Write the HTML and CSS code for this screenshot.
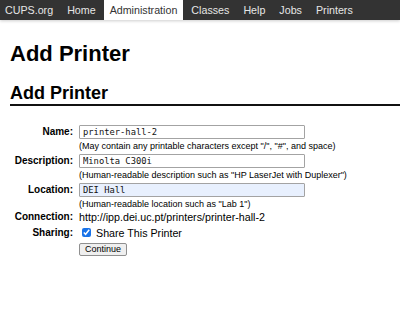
FILE: index.html
```html
<!DOCTYPE html>
<html lang="en">

<head>
  <meta charset="UTF-8">
  <meta name="viewport" content="width=device-width, initial-scale=1.0">
  <title>Add Printer - CUPS</title>
  <link rel="stylesheet" href="styles.css">
</head>

<body>
  <nav class="header">
    <ul class="menu">
      <li><a href="#">CUPS.org</a></li>
      <li><a href="#">Home</a></li>
      <li class="active"><a href="#">Administration</a></li>
      <li><a href="#">Classes</a></li>
      <li><a href="#">Help</a></li>
      <li><a href="#">Jobs</a></li>
      <li><a href="#">Printers</a></li>
    </ul>
  </nav>
  <main class="body">
    <h1 class="title">Add Printer</h1>
    <h2 class="subtitle">Add Printer</h2>
    <form class="form">
      <table class="fields">
        <tr class="row-input">
          <th>Name:</th>
          <td>
            <input class="field" type="text" name="PRINTER_NAME" value="printer-hall-2">
            <div class="hint">(May contain any printable characters except "/", "#", and space)</div>
          </td>
        </tr>
        <tr class="row-input">
          <th>Description:</th>
          <td>
            <input class="field" type="text" name="PRINTER_INFO" value="Minolta C300i">
            <div class="hint">(Human-readable description such as "HP LaserJet with Duplexer")</div>
          </td>
        </tr>
        <tr class="row-input">
          <th>Location:</th>
          <td>
            <input class="field filled" type="text" name="PRINTER_LOCATION" value="DEI Hall">
            <div class="hint">(Human-readable location such as "Lab 1")</div>
          </td>
        </tr>
        <tr class="row-text first">
          <th>Connection:</th>
          <td>http://ipp.dei.uc.pt/printers/printer-hall-2</td>
        </tr>
        <tr class="row-text">
          <th>Sharing:</th>
          <td>
            <label class="check"><input type="checkbox" name="PRINTER_IS_SHARED" checked> Share This Printer</label>
          </td>
        </tr>
        <tr class="row-submit">
          <th></th>
          <td><button class="btn" type="button">Continue</button></td>
        </tr>
      </table>
    </form>
  </main>
</body>

</html>
```

FILE: styles.css
```css
* {
  margin: 0;
  padding: 0;
  box-sizing: border-box;
}

body {
  font-family: "Liberation Sans", Arial, sans-serif;
  color: #000;
  background: #fff;
}

/* top menu */
.header {
  background: #333;
  box-shadow: 0 1px 3px rgba(0, 0, 0, 0.2);
}

.menu {
  display: flex;
  list-style: none;
  height: 20px;
  margin-left: -2px;
}

.menu li {
  display: flex;
  align-items: center;
  padding: 0 7px;
  font-size: 10.7px;
}

.menu a {
  color: #e6e6e6;
  text-decoration: none;
}

.menu li.active {
  background: #fff;
  padding: 0 6px;
  margin: 0 1px;
}

.menu li.active a {
  color: #333;
}

/* headings */
.body {
  padding: 0 10px;
}

.title {
  font-size: 22px;
  line-height: 24px;
  margin-top: 22px;
}

.subtitle {
  font-size: 18px;
  line-height: 19.5px;
  margin-top: 18px;
  margin-right: -10px;
  border-bottom: 2px solid #111;
}

/* form table */
.form {
  margin-top: 17px;
}

.fields {
  border-collapse: collapse;
}

.fields th {
  width: 63px;
  text-align: right;
  vertical-align: top;
  font-size: 10px;
  white-space: nowrap;
}

.fields td {
  padding-left: 6px;
  vertical-align: top;
  font-size: 10.7px;
}

.row-input th,
.row-input td {
  padding-top: 2px;
}

.row-input th {
  line-height: 14px;
}

.row-input td {
  padding-bottom: 1px;
}

.row-text th,
.row-text td {
  padding-top: 4px;
  line-height: 12px;
}

.row-text.first th,
.row-text.first td {
  padding-top: 1px;
}

.row-submit td {
  padding-top: 4px;
}

.field {
  display: block;
  width: 226px;
  height: 14px;
  border: 1px solid #a3a3a3;
  border-radius: 1px;
  font-family: "DejaVu Sans Mono", "Liberation Mono", monospace;
  font-size: 8.8px;
  padding: 0 3px;
  color: #111;
  background: #fff;
  outline: none;
}

.field.filled {
  background: #e8f0fe;
}

.hint {
  font-size: 9px;
  line-height: 10px;
  margin-top: 2px;
}

.check {
  display: flex;
  align-items: center;
}

.check input {
  width: 9px;
  height: 9px;
  margin: 0 5px 0 3px;
  accent-color: #1a73e8;
}

.btn {
  display: block;
  height: 13.5px;
  padding: 0 5px;
  font-family: "Liberation Sans", Arial, sans-serif;
  font-size: 9px;
  line-height: 11px;
  border: 1px solid #8f8f8f;
  border-radius: 2px;
  background: #efefef;
  color: #000;
}
```
